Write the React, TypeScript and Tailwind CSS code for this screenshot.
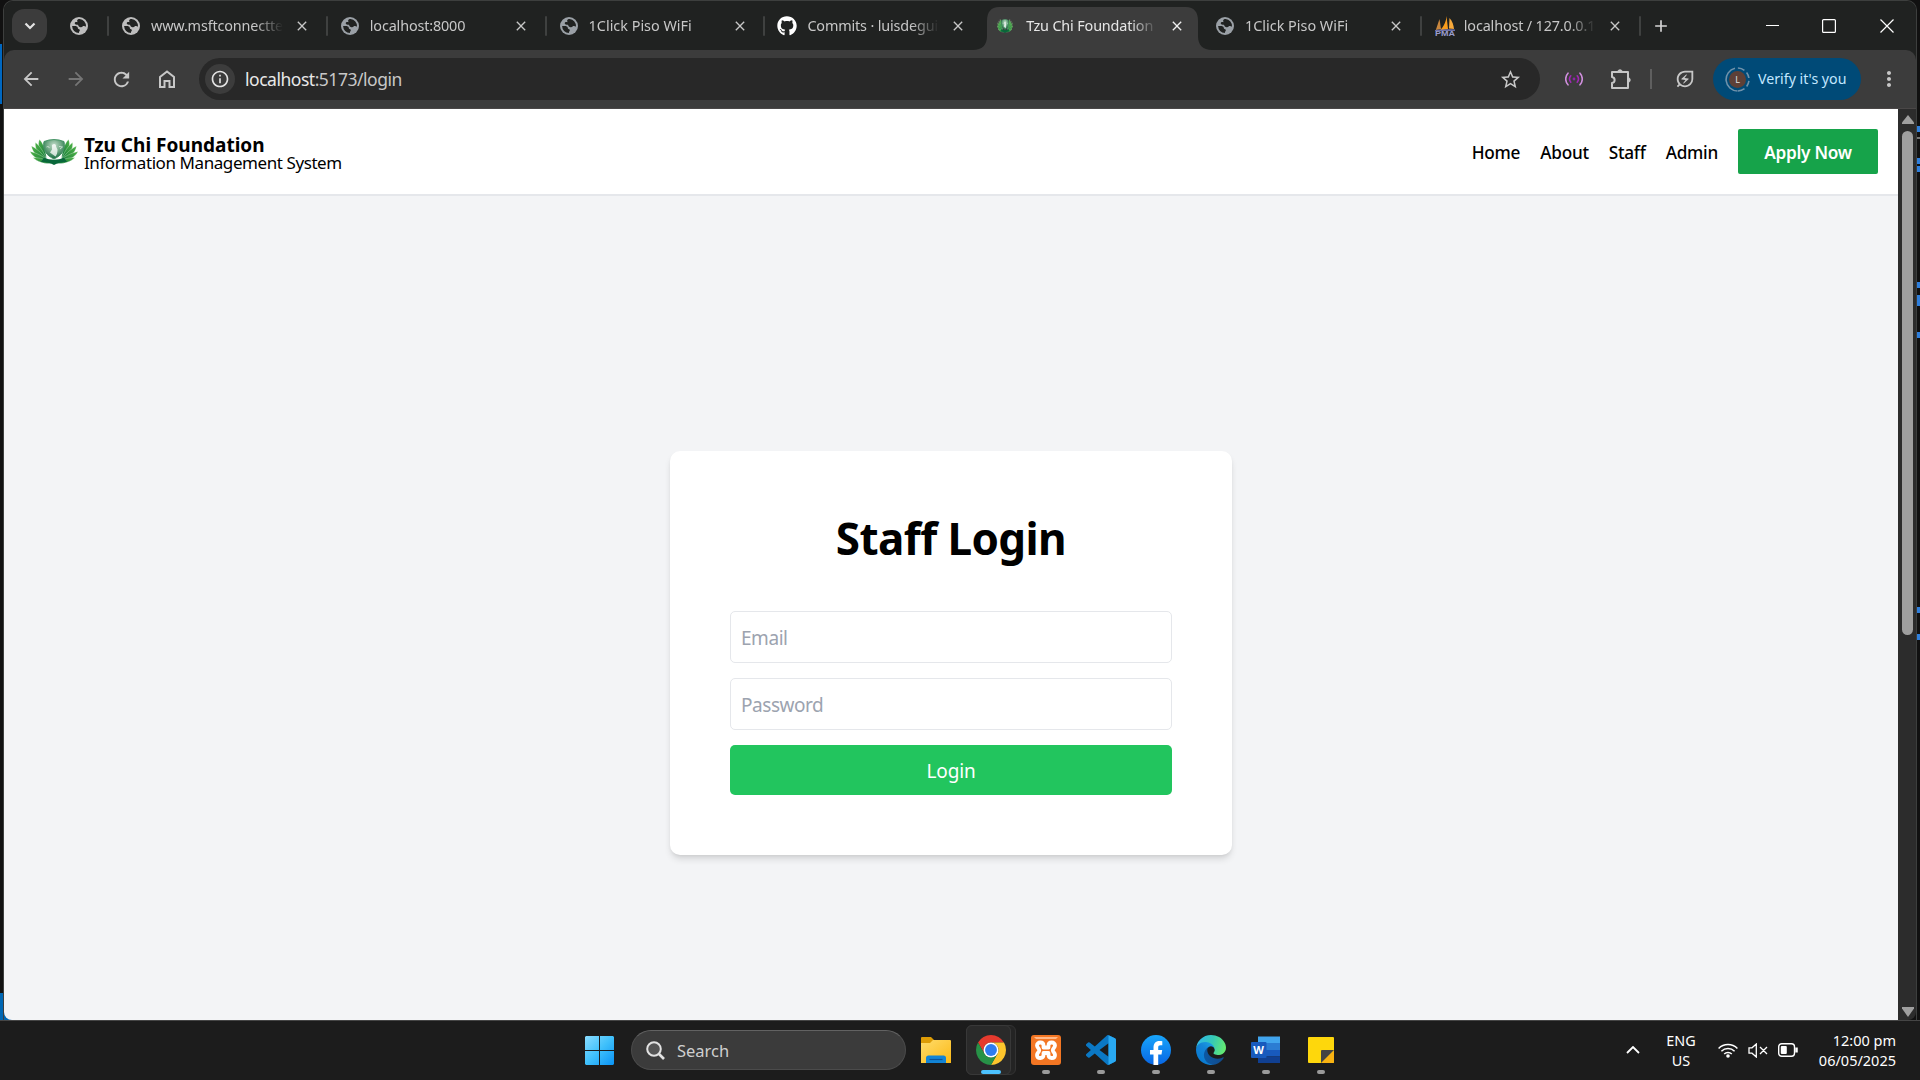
import React from "react";
import {
  MdArrowBack,
  MdArrowForward,
  MdRefresh,
  MdStarBorder,
  MdInfoOutline,
  MdOutlineExtension,
  MdMoreVert,
  MdClose,
  MdAdd,
  MdOutlineEnergySavingsLeaf,
} from "react-icons/md";
import { FaGithub } from "react-icons/fa";

function Globe({ color }: { color: string }) {
  return (
    <svg width="18" height="18" viewBox="0 0 18 18" className="shrink-0">
      <circle cx="9" cy="9" r="9" fill={color} />
      <path
        d="M9.600 2.100C6.900 2.100 6.900 4 7.600 5.200c-1.300-.4-2.900-.2-2.900 1.100 0 1.500 1.700 1.500 3.300 1.500.5 1.700 1.200 2.700 3.100 2.500 1.300-.1 1.300-1.200 2.300-1.300 1-.1 1.500.4 2.600.5A6.900 6.900 0 0 0 9.600 2.100Z"
        fill="#202221"
      />
      <path
        d="M2.100 9.100c2.300-.1 3.500-.1 4.800.4 1.200.5.600 1.800 1.500 2.500.9.600 1.700.4 1.400 1.600-.2.900-.9.900-.9 2.300A6.900 6.900 0 0 1 2.100 9.100Z"
        fill="#202221"
      />
    </svg>
  );
}

function Emblem({ className }: { className: string }) {
  return (
    <svg viewBox="0 0 48 26" className={className} preserveAspectRatio="none">
      <defs>
        <linearGradient id="leaf" x1="0" y1="0" x2="1" y2="1">
          <stop offset="0" stopColor="#4fb347" />
          <stop offset="1" stopColor="#0f7538" />
        </linearGradient>
        <radialGradient id="orb" cx=".5" cy=".3" r=".75">
          <stop offset="0" stopColor="#c3dccb" />
          <stop offset=".45" stopColor="#6fa884" />
          <stop offset="1" stopColor="#086036" />
        </radialGradient>
      </defs>
      {[false, true].map((flip) => (
        <g
          key={String(flip)}
          transform={flip ? "translate(48 0) scale(-1 1)" : undefined}
          fill="url(#leaf)"
          stroke="#fff"
          strokeOpacity=".55"
          strokeWidth=".5"
        >
          <path d="M9.500.500C7 6 9 13 16.500 19 15.500 11 13 4 9.500.500Z" />
          <path d="M5.500 3.500C4.500 10 8 16.500 17 21.500 14.500 14 10 7 5.500 3.500Z" />
          <path d="M1.500 7C2.500 13.500 8 19.500 18 23 13.500 15.500 7.500 10 1.500 7Z" />
          <path d="M0 12.500C3 18.500 10 22.500 20 23.500 14 17.500 7 14 0 12.500Z" />
          <path d="M3 18.500C7.500 23 14 25 22 24.500 16.500 20.500 10 18.500 3 18.500Z" />
        </g>
      ))}
      <path d="M14 2.500Q24-1.500 34 2.500C36 11 31.500 16.500 24 20 16.500 16.500 12 11 14 2.500Z" fill="url(#orb)" stroke="#3d8f5f" strokeWidth=".9" />
      <path d="M14 18.500c6 3 14 3 20 0l3 4.500c-5 0-9 .5-13 3-4-2.500-8-3-13-3Z" fill="#08673a" />
      <path d="M22 6c2-2 4.500-1 4 1.500l1.500 3c0 3-.5 5-2 7l-3.500-2.500-2-1.500 2-3Z" fill="#fff" opacity=".75" />
      <path d="M16.500 8c1.500-1 2.500 0 3 1M29 7.500l3.500.500-2.500 2" stroke="#fff" strokeWidth="1" fill="none" opacity=".6" />
    </svg>
  );
}

function Sails() {
  return (
    <svg width="20" height="20" viewBox="0 0 20 20" className="shrink-0">
      <path d="M4.500 3 6 13 .8 14Z" fill="#c9873e" />
      <path d="M11.500 0 13 13 5 14.500C9 10 11 6 11.500 0Z" fill="#f89c1c" />
      <path d="M14.500 2c3 3 4 7 4.500 11l-5-.5Z" fill="#f7a93b" />
      <path d="M0 14c7-1 13-1 20-.6V15H0Z" fill="#6c6fa8" />
      <text
        x="0"
        y="20"
        fontSize="8"
        fontWeight="700"
        textLength="20"
        lengthAdjust="spacingAndGlyphs"
        fontFamily="Liberation Sans"
        fill="#9a9dcc"
      >
        PMA
      </text>
    </svg>
  );
}

type Tab = { title: string; icon: React.ReactNode; active?: boolean; noSep?: boolean; tight?: boolean };

const tabs: Tab[] = [
  { title: "www.msftconnectte", icon: <Globe color="#bdbdbd" />, tight: true },
  { title: "localhost:8000", icon: <Globe color="#9aa0a6" />, tight: true },
  { title: "1Click Piso WiFi", icon: <Globe color="#9aa0a6" /> },
  { title: "Commits · luisdegui", icon: <FaGithub size={20} color="#fff" className="-ml-px shrink-0" />, tight: true },
  { title: "Tzu Chi Foundation", icon: <Emblem className="mr-[3px] h-[14px] w-4 shrink-0" />, active: true, tight: true },
  { title: "1Click Piso WiFi", icon: <Globe color="#9aa0a6" />, noSep: true },
  { title: "localhost / 127.0.0.1", icon: <Sails />, tight: true },
];

function TabItem({ tab }: { tab: Tab }) {
  return (
    <div className="relative flex h-full w-[218.8px] shrink-0 items-center">
      {tab.active && (
        <svg className="absolute left-[-9px] top-[6px]" width="241" height="43" viewBox="0 0 241 43">
          <path
            d="M0 43c9 0 14-5 14-14V14C14 5 18 0 26 0h187c8 0 12 5 12 14v15c0 9 5 14 14 14Z"
            fill="#3c3c3c"
          />
        </svg>
      )}
      <span
        className={
          tab.active || tab.noSep ? "h-5 w-[2px] bg-transparent" : "h-5 w-[2px] rounded-full bg-[#3f4140]"
        }
      />
      <span className="relative ml-[13px] flex w-[18px] shrink-0 items-center">{tab.icon}</span>
      <span
        className={`relative ml-[11px] w-[132px] overflow-hidden whitespace-nowrap text-[14.400px] leading-5 [mask-image:linear-gradient(to_right,#000_104px,transparent_132px)] ${
          tab.active ? "text-[#e6e6e6]" : "text-[#c7c7c7]"
        } ${tab.tight ? "tracking-[-0.15px]" : ""}`}
      >
        {tab.title}
      </span>
      <MdClose size={16} className={`relative ml-[11px] shrink-0 ${tab.active ? "text-[#f0f0f0]" : "text-[#c7c7c7]"}`} />
    </div>
  );
}

function TabStrip() {
  return (
    <div className="flex h-[49px] w-full items-center bg-[#202221]">
      <div className="ml-2 flex h-[34px] w-[35px] shrink-0 items-center justify-center rounded-xl bg-[#3c3c3c]">
        <svg width="12" height="8" viewBox="0 0 12 8" fill="none" stroke="#e3e3e3" strokeWidth="2.200">
          <path d="m1.500 1.500 4.500 4.500 4.500-4.500" />
        </svg>
      </div>
      <div className="ml-[23px] mr-[19px] flex">
        <Globe color="#bdbdbd" />
      </div>
      {tabs.map((t, i) => (
        <TabItem key={i} tab={t} />
      ))}
      <span className="h-5 w-[2px] rounded-full bg-[#3f4140]" />
      <MdAdd size={20} className="ml-[10px] text-[#d5d5d5]" />
      <svg width="128" height="14" viewBox="0 0 128 14" className="ml-[95px]" fill="none" stroke="#fff" strokeWidth="1.200">
        <path d="M0 6.500h13" />
        <rect x="56.600" y=".6" width="12.800" height="12.800" rx="1" />
        <path d="m114.500.5 13 13m0-13-13 13" />
      </svg>
    </div>
  );
}

function Toolbar() {
  return (
    <div className="bg-[#202221]">
      <div className="flex h-[59px] items-center rounded-t-[10px] border-b border-[#4a4747] bg-[#3c3c3c] text-[#c7c7c7]">
        <MdArrowBack size={22} className="ml-[16px]" />
        <MdArrowForward size={22} className="ml-[23px] text-[#757575]" />
        <MdRefresh size={23} className="ml-[23px]" />
        <svg width="16" height="18" viewBox="0 0 16 18" className="ml-[26px]" fill="none" stroke="currentColor" strokeWidth="2">
          <path d="M1 17V7l7-5.500L15 7v10h-4.500v-6h-5v6Z" />
        </svg>
        <div className="ml-[24px] flex h-[42px] w-[1341px] items-center rounded-full bg-[#282828]">
          <span className="ml-[6px] flex size-[30px] items-center justify-center rounded-full bg-[#3c3c3c]">
            <MdInfoOutline size={20} className="text-[#e3e3e3]" />
          </span>
          <span className="ml-[10px] text-[17.500px] leading-6 tracking-[-0.48px] text-[#e8e8e8]">
            localhost<span className="text-[#c7c7c7]">:5173/login</span>
          </span>
          <MdStarBorder size={23} className="ml-auto mr-[18px]" />
        </div>
        <svg width="18" height="14" viewBox="0 0 18 14" className="ml-[25px]" fill="none" strokeWidth="1.600" strokeLinecap="round">
          <path d="M3 1.200a8.500 8.500 0 0 0 0 11.600M15 1.200a8.500 8.500 0 0 1 0 11.600" stroke="#cf8fdc" />
          <path d="M5.800 3.800a5 5 0 0 0 0 6.400M12.200 3.800a5 5 0 0 1 0 6.400" stroke="#a127b5" />
          <circle cx="9" cy="7" r="1.400" fill="#8e24aa" />
        </svg>
        <svg
          width="22"
          height="22"
          viewBox="0 0 22 22"
          className="ml-[27px]"
          fill="none"
          stroke="currentColor"
          strokeWidth="2"
          strokeLinejoin="round"
        >
          <path d="M2 4h16v16H2v-5c3.500-.5 3.500-5.500 0-6Z" />
          <path d="M7.500 3.500a2.700 2.700 0 0 1 5 0ZM18.500 9.500a2.700 2.700 0 0 1 0 5Z" fill="currentColor" strokeWidth="1" />
        </svg>
        <span className="ml-[18px] h-5 w-[2px] bg-[#5f5f5f]" />
        <MdOutlineEnergySavingsLeaf size={22} className="ml-[22px]" />
        <div className="ml-[17px] flex h-[42px] w-[148px] items-center rounded-full bg-[#004a77]">
          <span className="relative ml-3 flex size-[25px] items-center justify-center">
            <svg className="absolute inset-0" width="25" height="25" viewBox="0 0 25 25" fill="none">
              <path d="M12.500 24A11.500 11.500 0 0 1 10 1.300" stroke="#6f92ab" strokeWidth="1.600" />
              <circle
                cx="12.500"
                cy="12.500"
                r="11.500"
                stroke="#6f92ab"
                strokeWidth="1.600"
                strokeDasharray="7 3 6 3 6 3 7 60"
                transform="rotate(-88 12.500 12.500)"
              />
            </svg>
            <span className="relative flex size-[17px] items-center justify-center rounded-full bg-[#5d4037] text-[9px] leading-none text-[#e0e0e0]">
              L
            </span>
          </span>
          <span className="ml-[8px] whitespace-nowrap text-[14.200px] leading-5 text-[#c2e7ff]">Verify it's you</span>
        </div>
        <MdMoreVert size={24} className="ml-4" />
      </div>
    </div>
  );
}

function SiteHeader() {
  return (
    <header className="flex h-[87px] shrink-0 items-center border-b-2 border-[#e5e7eb] bg-white text-black">
      <Emblem className="ml-[26px] h-[26px] w-12" />
      <div className="ml-[6px] flex flex-col whitespace-nowrap pt-1">
        <span className="text-[19px] font-bold leading-[18px]">Tzu Chi Foundation</span>
        <span className="text-[17px] leading-[18px] tracking-[-0.42px]">Information Management System</span>
      </div>
      <nav className="ml-auto flex items-center gap-5 text-[17.200px] font-medium tracking-[-0.25px]">
        <a className="pt-0.5">Home</a>
        <a className="pt-0.5">About</a>
        <a className="pt-0.5">Staff</a>
        <a className="pt-0.5">Admin</a>
        <a className="mr-5 flex h-[45px] w-[140px] items-center justify-center rounded-[2px] bg-[#16a34a] pt-0.5 font-semibold text-white">
          Apply Now
        </a>
      </nav>
    </header>
  );
}

function LoginCard() {
  return (
    <div className="mt-[255px] flex h-[404px] w-[562px] flex-col rounded-[10px] bg-white px-[60px] pt-[60px] shadow-[0_5px_7px_-1px_rgba(0,0,0,0.12),0_2px_4px_-2px_rgba(0,0,0,0.1)]">
      <h1 className="text-center text-[44px] font-bold leading-[55px] tracking-[-0.6px] text-black">Staff Login</h1>
      <input
        placeholder="Email"
        className="mt-[45px] h-[52px] shrink-0 rounded-[5px] border border-[#e5e7eb] px-[10px] pt-0.5 text-[19px] tracking-[-0.45px] placeholder:text-[#9ca3af]"
      />
      <input
        placeholder="Password"
        className="mt-[15px] h-[52px] shrink-0 rounded-[5px] border border-[#e5e7eb] px-[10px] pt-0.5 text-[19px] tracking-[-0.45px] placeholder:text-[#9ca3af]"
      />
      <button className="mt-[15px] h-[50px] shrink-0 rounded-[5px] bg-[#22c55e] pt-0.5 text-[19px] tracking-[-0.15px] text-white">
        Login
      </button>
    </div>
  );
}

function Scrollbar() {
  return (
    <div className="flex w-[18px] shrink-0 flex-col items-center rounded-br-lg bg-[#2c2c2c]">
      <svg width="12" height="9" viewBox="0 0 12 9" className="ml-px mt-[6px]">
        <path d="M6 0 12 7.500V9H0V7.500Z" fill="#9f9f9f" />
      </svg>
      <div className="ml-px mt-[7px] h-[504px] w-[11px] rounded-full bg-[#9f9f9f]" />
      <svg width="12" height="10" viewBox="0 0 12 10" className="mb-[3px] ml-px mt-auto">
        <path d="M6 10 12 1.500V0H0v1.500Z" fill="#9f9f9f" />
      </svg>
    </div>
  );
}

function ChromeLogo() {
  return (
    <svg width="30" height="30" viewBox="0 0 48 48">
      <path d="M24 12h20.780A24 24 0 0 0 3.220 12l10.390 18A12 12 0 0 1 24 12Z" fill="#e53a2e" />
      <path d="M34.390 30 24 48A24 24 0 0 0 44.780 12H24a12 12 0 0 1 10.390 18Z" fill="#fdc52c" />
      <path d="M13.610 30 3.220 12A24 24 0 0 0 24 48l10.390-18a12 12 0 0 1-20.780 0Z" fill="#279247" />
      <circle cx="24" cy="24" r="12" fill="#fff" />
      <circle cx="24" cy="24" r="9.500" fill="#2f7cf0" />
    </svg>
  );
}

function XamppLogo() {
  return (
    <svg width="30" height="30" viewBox="0 0 30 30">
      <rect width="30" height="30" rx="3" fill="#f37623" />
      <path d="M3 2h24l-2 2H5Z" fill="#ffb98a" />
      <path
        d="M12.500 12.500v-2.100C12.500 8.600 11.300 7.500 9.300 7.500S6 8.800 6 10.500c0 2.200 2.200 2.700 2.200 4.700S6 17.800 6 19.900s1.300 3.100 3.300 3.100 3.200-1.200 3.200-2.900V18h5v2.100c0 1.700 1.200 2.900 3.200 2.900s3.300-1 3.300-3.100-2.200-2.600-2.200-4.700 2.200-2.500 2.200-4.700c0-1.700-1.300-3-3.300-3s-3.200 1.100-3.200 2.900v2.100Z"
        fill="none"
        stroke="#fff"
        strokeWidth="3.800"
        strokeLinejoin="round"
      />
    </svg>
  );
}

function CodeLogo() {
  return (
    <svg width="30" height="30" viewBox="0 0 24 24">
      <path
        d="M23.150 2.587 18.210.21a1.494 1.494 0 0 0-1.705.29l-9.460 8.630-4.120-3.128a1 1 0 0 0-1.276.057L.327 7.261a1 1 0 0 0-.001 1.479L3.899 12 .326 15.260a1 1 0 0 0 .001 1.479L1.650 17.940a1 1 0 0 0 1.276.057l4.120-3.128 9.460 8.630a1.492 1.492 0 0 0 1.704.290l4.942-2.377A1.500 1.500 0 0 0 24 20.060V3.939a1.500 1.500 0 0 0-.850-1.352Zm-5.146 14.861L10.826 12l7.178-5.448Z"
        fill="#0b78c4"
      />
      <path d="m18 .1 5.150 2.487A1.500 1.500 0 0 1 24 3.939V20.060a1.500 1.500 0 0 1-.850 1.352L18 23.900Z" fill="#29a9f2" />
    </svg>
  );
}

function FacebookLogo() {
  return (
    <svg width="30" height="30" viewBox="0 0 30 30">
      <defs>
        <linearGradient id="fb" x1="0" y1="0" x2="0" y2="1">
          <stop offset="0" stopColor="#18a5fb" />
          <stop offset="1" stopColor="#0866e4" />
        </linearGradient>
      </defs>
      <circle cx="15" cy="15" r="15" fill="url(#fb)" />
      <path
        d="M12.500 30V19.500H9V15h3.500v-2.500C12.500 8.500 14.500 6 18.500 6c1.200 0 2 .1 2.800.3v4h-1.800c-1.800 0-2.300.8-2.300 2.300V15h4l-.7 4.500h-3.300V30Z"
        fill="#fff"
      />
    </svg>
  );
}

function EdgeLogo() {
  return (
    <svg width="30" height="30" viewBox="0 0 256 256">
      <defs>
        <linearGradient id="e1" x1="58" y1="177" x2="237" y2="177" gradientUnits="userSpaceOnUse">
          <stop offset="0" stopColor="#0c59a4" />
          <stop offset="1" stopColor="#114a8b" />
        </linearGradient>
        <linearGradient id="e2" x1="157" y1="100" x2="46" y2="221" gradientUnits="userSpaceOnUse">
          <stop offset="0" stopColor="#1b9de2" />
          <stop offset=".4" stopColor="#1484d8" />
          <stop offset="1" stopColor="#0a7bd0" />
        </linearGradient>
        <linearGradient id="e3" x1="10" y1="50" x2="250" y2="120" gradientUnits="userSpaceOnUse">
          <stop offset="0" stopColor="#2fb8ea" />
          <stop offset=".5" stopColor="#36c9b5" />
          <stop offset="1" stopColor="#66eb6e" />
        </linearGradient>
      </defs>
      <path
        d="M231 190.500c-3.400 1.800-6.900 3.400-10.500 4.700a101.500 101.500 0 0 1-35.900 6.400c-47.300 0-88.500-32.500-88.500-74.300 0-11.500 6.400-21.900 16.400-27.300-42.800 1.800-53.800 46.400-53.800 72.500 0 73.900 68.100 81.400 82.800 81.400 7.900 0 19.800-2.300 27-4.600l1.300-.4a128.300 128.300 0 0 0 66.600-52.800 4 4 0 0 0-5.400-5.600Z"
        fill="url(#e1)"
      />
      <path
        d="M105.700 241.400a79.200 79.200 0 0 1-22.700-21.300 80.700 80.700 0 0 1 29.500-120c3.200-1.500 8.500-4.100 15.600-4a32.400 32.400 0 0 1 25.700 13 31.900 31.900 0 0 1 6.300 18.700c0-.2 24.500-79.600-80-79.600-43.900 0-80 41.600-80 78.200a130.200 130.200 0 0 0 12.100 56 128 128 0 0 0 156.400 67 75.600 75.600 0 0 1-62.800-8Z"
        fill="url(#e2)"
      />
      <path
        d="M152.300 148.900c-.9 1-3.400 2.500-3.400 5.600 0 2.600 1.700 5.100 4.700 7.200 14.400 10 41.500 8.700 41.600 8.700a59.600 59.600 0 0 0 30.300-8.300 61.400 61.400 0 0 0 30.400-52.900c.3-22.400-8-37.300-11.300-43.900C223.500 23.900 177.700 0 128 0A128 128 0 0 0 0 126.200c.5-36.500 36.800-66 80-66 3.500 0 23.500.3 42 10.100 16.300 8.600 24.900 19 30.800 29.200 6.200 10.700 7.300 24.100 7.300 29.500 0 5.300-2.700 13.300-7.800 19.900Z"
        fill="url(#e3)"
      />
    </svg>
  );
}

function WordLogo() {
  return (
    <svg width="30" height="30" viewBox="0 0 30 30">
      <path d="M7 1.500h22V8H7Z" fill="#41a5ee" />
      <path d="M7 8h22v7H7Z" fill="#2b7cd3" />
      <path d="M7 15h22v6.500H7Z" fill="#185abd" />
      <path d="M7 21.500h22V28H7Z" fill="#103f91" />
      <rect y="7" x="0" width="15.500" height="16" rx="1" fill="#185abd" />
      <text x="7.600" y="19" textAnchor="middle" fontSize="11" fontWeight="700" fontFamily="Noto Sans" fill="#fff">
        W
      </text>
    </svg>
  );
}

function StickyLogo() {
  return (
    <svg width="30" height="30" viewBox="0 0 30 30">
      <rect x="2" y="2" width="26" height="26" rx="1" fill="#fed70c" />
      <path d="M15 28 28 15v12a1 1 0 0 1-1 1Z" fill="#f9b312" />
      <path d="M15 28V16a1 1 0 0 1 1-1h12Z" fill="#444" />
    </svg>
  );
}

function AppSlot({ children }: { children: React.ReactNode }) {
  return (
    <div className="flex h-full w-[55px] shrink-0 flex-col items-center pt-[14px]">
      {children}
      <span className="mt-[5px] h-1 w-2 rounded-full bg-[#9a9a9a]" />
    </div>
  );
}

function Taskbar() {
  return (
    <div className="flex h-[60px] w-full items-center border-t border-[#454545] bg-[#1c1c1c] pb-px text-white">
      <svg width="29" height="29" viewBox="0 0 29 29" className="ml-[585px] shrink-0">
        <defs>
          <linearGradient id="win" x1="0" y1="0" x2="1" y2="1">
            <stop offset="0" stopColor="#8adcff" />
            <stop offset=".5" stopColor="#3fc0fb" />
            <stop offset="1" stopColor="#0a93f5" />
          </linearGradient>
        </defs>
        <path d="M1 0h13v14H0V1Zm14 0h13l1 1v13H15ZM0 15h14v14H1l-1-1Zm15 0h14v13l-1 1H15Z" fill="url(#win)" />
      </svg>
      <div className="ml-[17px] flex h-10 w-[275px] shrink-0 items-center rounded-full border border-[#4b4b4b] border-t-[#626262] bg-[#3b3b3b]">
        <svg width="19" height="19" viewBox="0 0 19 19" className="ml-[14px]" fill="none" stroke="#e2e2e2" strokeWidth="2">
          <circle cx="8" cy="8" r="6.800" fill="#555" />
          <path d="m13 13 5 5" strokeWidth="2.600" />
        </svg>
        <span className="ml-3 pt-px text-[16.500px] leading-5 text-[#cfcfcf]">Search</span>
      </div>
      <svg width="30" height="26" viewBox="0 0 30 26" className="ml-[15px] shrink-0">
        <defs>
          <linearGradient id="fold" x1="0" y1="0" x2="1" y2="1">
            <stop offset="0" stopColor="#ffdc6b" />
            <stop offset="1" stopColor="#fbb916" />
          </linearGradient>
        </defs>
        <path d="M0 1a1 1 0 0 1 1-1h9l3 3v6H0Z" fill="#dd9c06" />
        <path d="M0 6h9l3-3h17a1 1 0 0 1 1 1v22H0Z" fill="url(#fold)" />
        <path d="M5 26v-5a2.500 2.500 0 0 1 2.500-2.500h15A2.500 2.500 0 0 1 25 21v5Z" fill="#1284d6" />
        <path d="M8.500 22.500h13" stroke="#0a539b" strokeWidth="1.200" />
      </svg>
      <div className="ml-[15px] flex h-[50px] w-[50px] shrink-0 rounded-md border border-[#333] bg-[#242424]">
        <div className="ml-[-1px] mt-[-1px] flex h-[50px] w-[45px] shrink-0 flex-col items-center rounded-md border border-[#383838] bg-[#2a2a2a] pl-[5px] pt-[9px]">
          <ChromeLogo />
          <span className="mt-[5px] h-1 w-5 rounded-full bg-[#4cc2ff]" />
        </div>
      </div>
      <div className="ml-[2px] flex h-full shrink-0">
        <AppSlot>
          <XamppLogo />
        </AppSlot>
        <AppSlot>
          <CodeLogo />
        </AppSlot>
        <AppSlot>
          <FacebookLogo />
        </AppSlot>
        <AppSlot>
          <EdgeLogo />
        </AppSlot>
        <AppSlot>
          <WordLogo />
        </AppSlot>
        <AppSlot>
          <StickyLogo />
        </AppSlot>
      </div>
      <svg width="14" height="8" viewBox="0 0 14 8" className="ml-auto mr-[26px]" fill="none" stroke="#fff" strokeWidth="1.800">
        <path d="m1 7 6-6 6 6" />
      </svg>
      <div className="w-[30px] pt-px text-center text-[14.400px] leading-5">
        ENG
        <br />
        US
      </div>
      <svg width="20" height="15" viewBox="0 0 20 15" className="ml-[22px]" fill="none" stroke="#fff" strokeWidth="1.500">
        <path d="M.6 5.500a13.300 13.300 0 0 1 18.800 0M3.400 8.300a9.400 9.400 0 0 1 13.200 0M6.200 11a5.400 5.400 0 0 1 7.600 0" />
        <circle cx="10" cy="13" r="1.800" fill="#fff" stroke="none" />
      </svg>
      <svg width="20" height="15" viewBox="0 0 20 15" className="ml-[10px]" fill="none" stroke="#fff" strokeWidth="1.300">
        <path d="M1 4.800h3L8.300 1v13L4 10.200H1ZM12 4l7 7m0-7-7 7" />
      </svg>
      <svg width="20" height="14" viewBox="0 0 20 14" className="ml-[10px]" fill="none" stroke="#fff" strokeWidth="1.400">
        <rect x=".7" y=".7" width="15.800" height="12.600" rx="3" />
        <rect x="2.800" y="3" width="6" height="8" rx="1" fill="#fff" stroke="none" />
        <path d="M18.500 4.500v5" strokeWidth="2.500" />
      </svg>
      <div className="ml-5 mr-6 w-[78px] whitespace-nowrap text-right text-[14.500px] leading-5">
        <div>12:00 pm</div>
        <div>06/05/2025</div>
      </div>
    </div>
  );
}

const edgeMarks = [
  { gap: "mt-[126px]", h: "h-[6px]", c: "bg-[#2f7fdc]" },
  { gap: "mt-[5px]", h: "h-[2px]", c: "bg-[#777]" },
  { gap: "mt-[19px]", h: "h-[6px]", c: "bg-[#2f7fdc]" },
  { gap: "mt-[2px]", h: "h-[6px]", c: "bg-[#2f7fdc]" },
  { gap: "mt-[110px]", h: "h-[6px]", c: "bg-[#2f7fdc]" },
  { gap: "mt-[7px]", h: "h-[11px]", c: "bg-[#2f7fdc]" },
  { gap: "mt-[26px]", h: "h-[6px]", c: "bg-[#2f7fdc]" },
  { gap: "mt-[269px]", h: "h-[6px]", c: "bg-[#2f7fdc]" },
  { gap: "mt-[21px]", h: "h-[6px]", c: "bg-[#2f7fdc]" },
];

export default function App() {
  return (
    <div className="flex h-[1080px] w-[1920px] flex-col overflow-hidden bg-[#111] font-['Noto_Sans',sans-serif]">
      <div className="flex h-[1020px]">
        <div className="flex w-[3px] shrink-0 flex-col">
          <div className="mt-11 h-[60px] w-[2px] bg-[#0067c0]" />
          <div className="mt-auto h-[27px] w-[3px] bg-[#0067b4]" />
        </div>
        <div className="flex w-[1914px] shrink-0 flex-col overflow-hidden rounded-t-[10px] border border-b-0 border-[#3d3f3e] bg-[#202221]">
          <TabStrip />
          <Toolbar />
          <div className="flex min-h-0 grow bg-[#0067b4]">
            <div className="flex w-[1894px] shrink-0 flex-col items-center rounded-bl-lg bg-[#f3f4f6]">
              <div className="w-full">
                <SiteHeader />
              </div>
              <LoginCard />
            </div>
            <div className="flex bg-[#111]">
              <Scrollbar />
            </div>
          </div>
        </div>
        <div className="flex w-[3px] shrink-0 flex-col">
          {edgeMarks.map((m, i) => (
            <div key={i} className={`w-full shrink-0 ${m.gap} ${m.h} ${m.c}`} />
          ))}
        </div>
      </div>
      <Taskbar />
    </div>
  );
}
